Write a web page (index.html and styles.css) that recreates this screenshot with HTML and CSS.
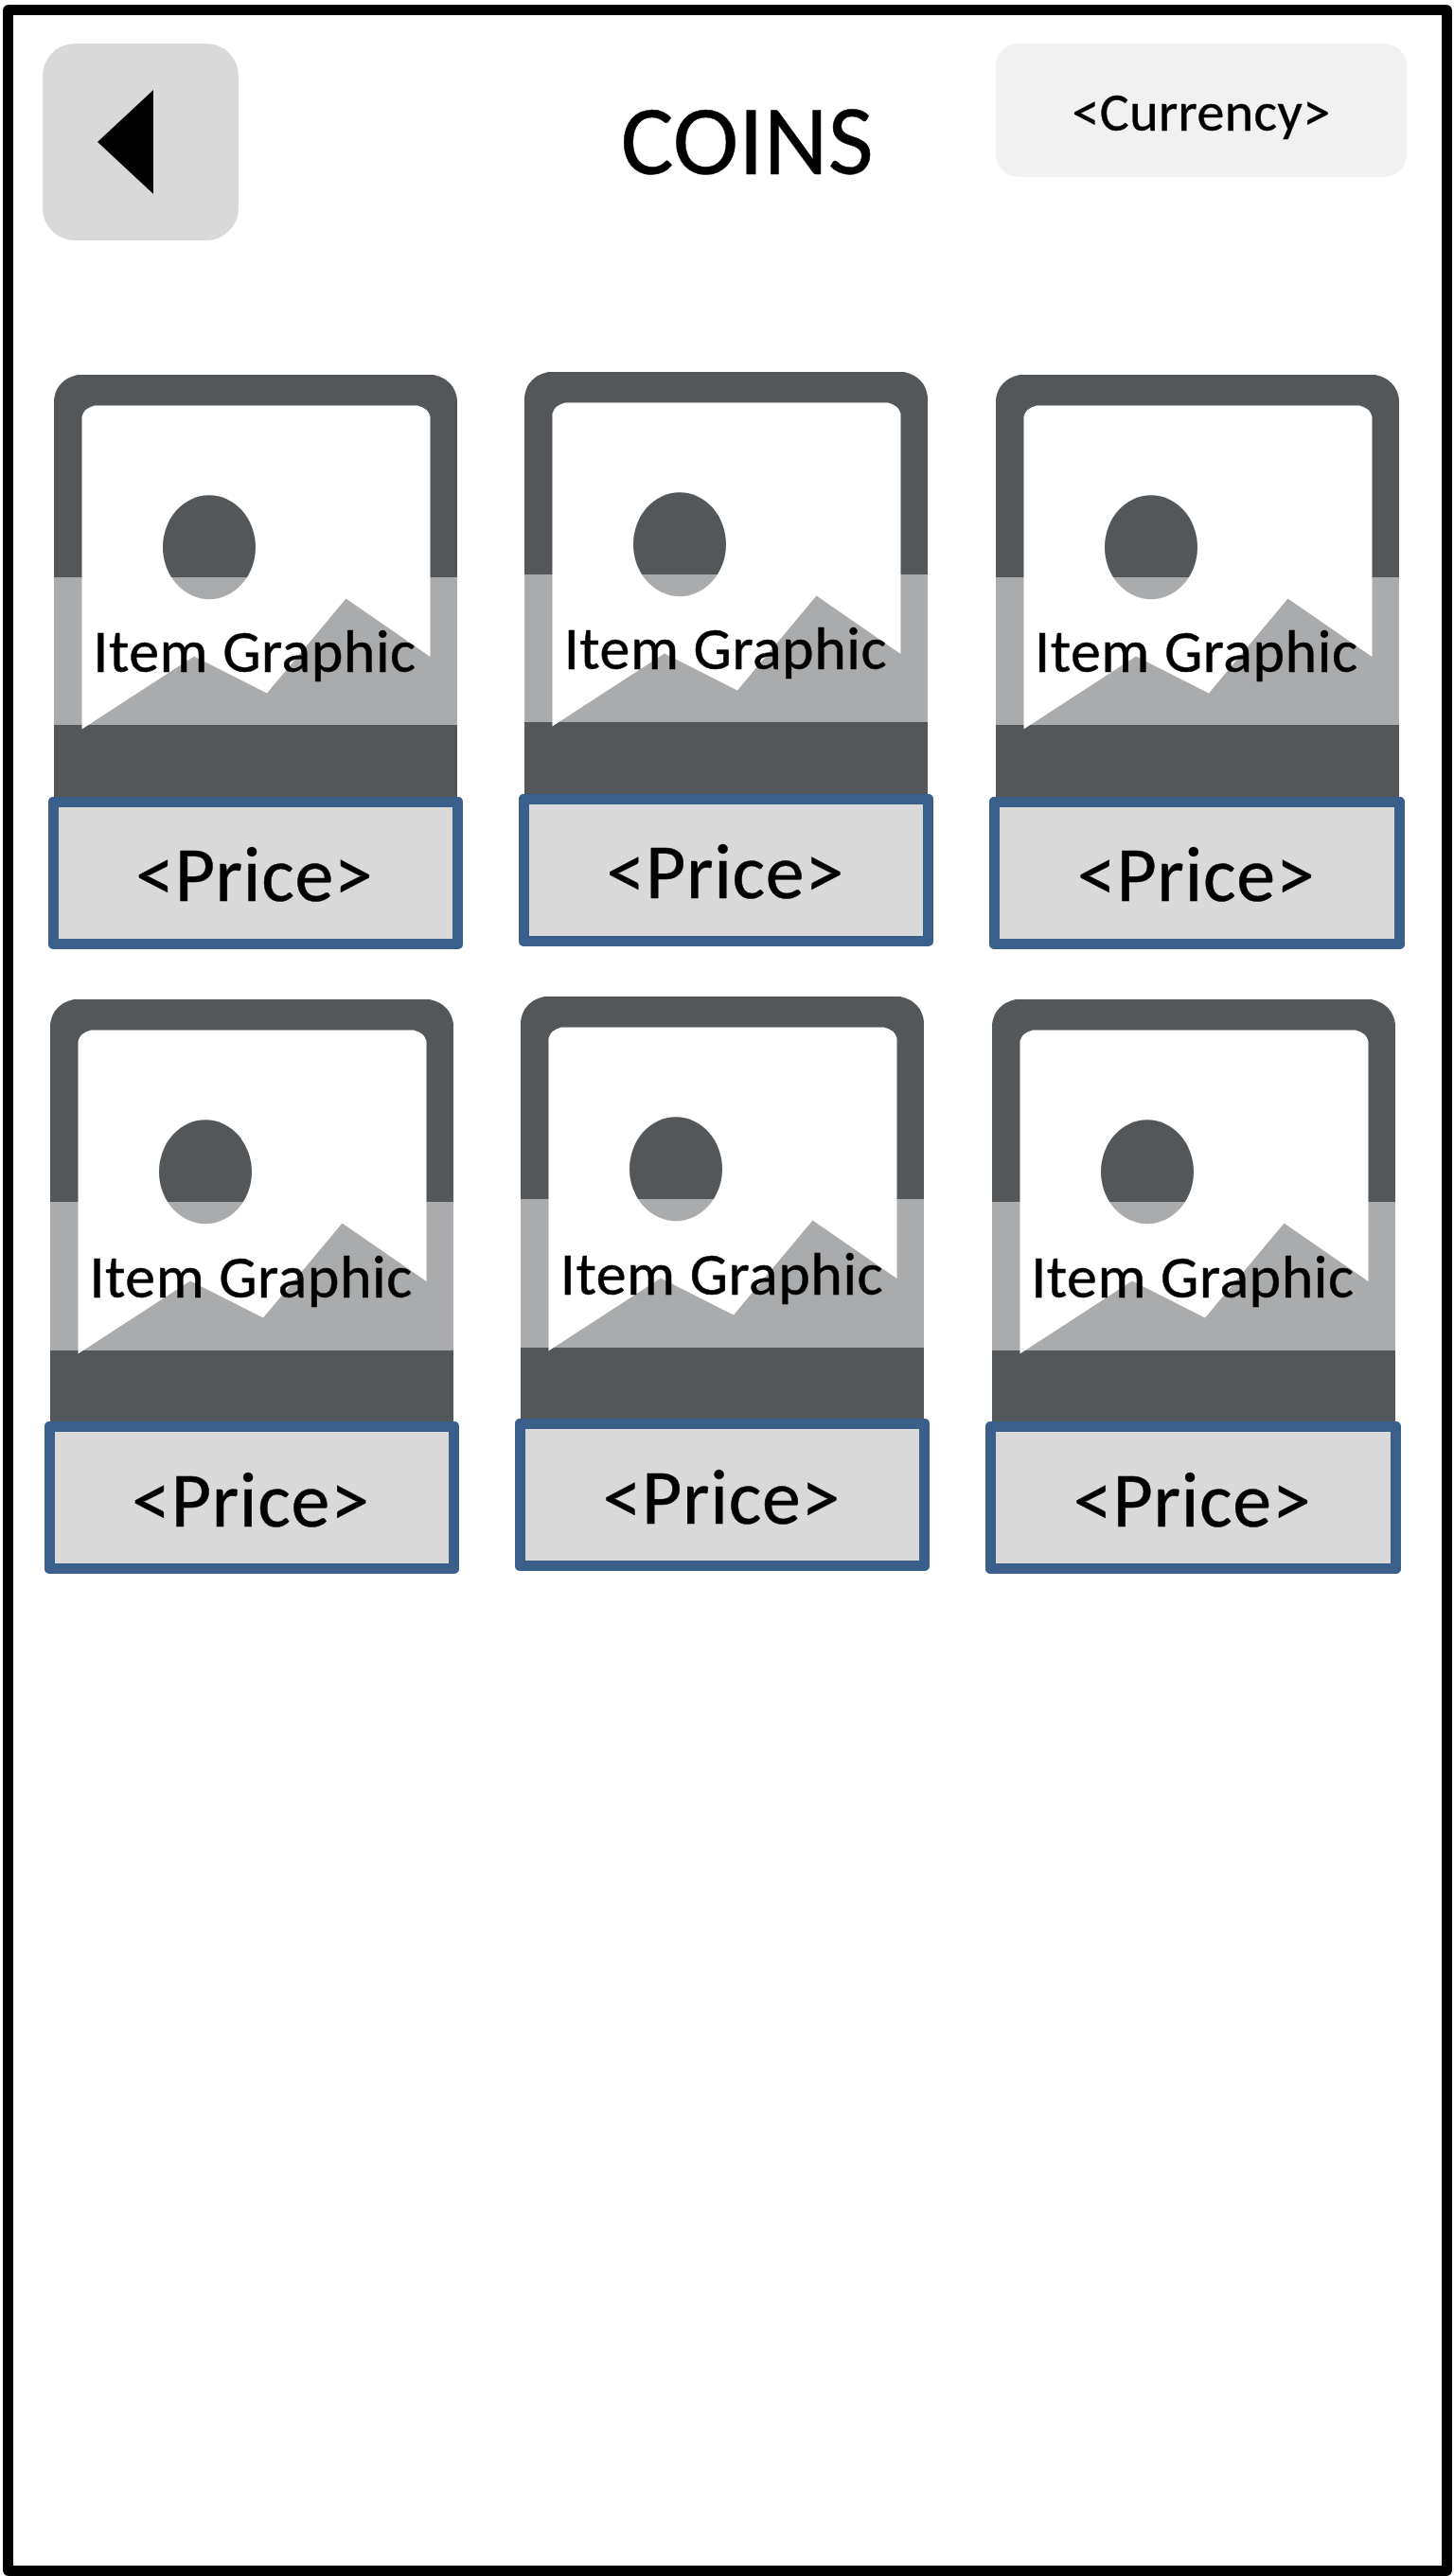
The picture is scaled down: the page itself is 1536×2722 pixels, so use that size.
FILE: index.html
```html
<!DOCTYPE html>
<html lang="en">
<head>
<meta charset="utf-8">
<title>Coins</title>
<link rel="stylesheet" href="styles.css">
</head>
<body>
<svg class="defs" aria-hidden="true">
  <symbol id="placeholder" viewBox="0 0 426 448">
    <path class="ink" d="M0 448V26Q3 5 25 0H401Q423 5 426 26V448Z"/>
    <path class="paper" d="M29.500 374.500V44Q32 35 43 32.500H384Q395 35 397.500 44V298L308.500 236.500 225 336.500 148 297.500Z"/>
    <ellipse class="ink" cx="164" cy="182.200" rx="49" ry="55"/>
  </symbol>
</svg>
<main class="screen">
  <header class="topbar">
    <button class="back" aria-label="Back">
      <svg class="arrow" viewBox="0 0 59 110"><path d="M0 55 59 0V110Z"/></svg>
    </button>
    <h1 class="title"><span>COINS</span></h1>
    <div class="currency"><span>&lt;Currency&gt;</span></div>
  </header>
  <section class="grid">
    <article class="card"><div class="graphic"><svg class="art"><use href="#placeholder"/></svg><div class="band"><span>Item Graphic</span></div></div><button class="price"><span>&lt;Price&gt;</span></button></article>
    <article class="card raised"><div class="graphic"><svg class="art"><use href="#placeholder"/></svg><div class="band"><span>Item Graphic</span></div></div><button class="price"><span>&lt;Price&gt;</span></button></article>
    <article class="card"><div class="graphic"><svg class="art"><use href="#placeholder"/></svg><div class="band"><span>Item Graphic</span></div></div><button class="price"><span>&lt;Price&gt;</span></button></article>
  </section>
  <section class="grid second">
    <article class="card"><div class="graphic"><svg class="art"><use href="#placeholder"/></svg><div class="band"><span>Item Graphic</span></div></div><button class="price"><span>&lt;Price&gt;</span></button></article>
    <article class="card raised"><div class="graphic"><svg class="art"><use href="#placeholder"/></svg><div class="band"><span>Item Graphic</span></div></div><button class="price"><span>&lt;Price&gt;</span></button></article>
    <article class="card"><div class="graphic"><svg class="art"><use href="#placeholder"/></svg><div class="band"><span>Item Graphic</span></div></div><button class="price"><span>&lt;Price&gt;</span></button></article>
  </section>
</main>
</body>
</html>
```
FILE: styles.css
```css
* { box-sizing: border-box; }
body {
  margin: 0;
  height: 2722px;
  padding: 4.5px 2.5px 0 3px;
  overflow: hidden;
  background: #fff;
  color: #000;
  font-family: Carlito, Calibri, Lato, sans-serif;
  -webkit-text-stroke: 0.5px #000;
}
.defs { position: absolute; width: 0; height: 0; }
.ink { fill: #53575a; }
.paper { fill: #fff; }
button { font: inherit; color: inherit; border: 0; padding: 0; margin: 0; }

.screen {
  height: 2717.5px;
  border: 11px solid #000;
  border-radius: 6px;
}
.topbar {
  display: flex;
  justify-content: space-between;
  align-items: flex-start;
  height: 208px;
  margin: 30px 36.5px 0 30.5px;
}
.back {
  display: flex;
  align-items: center;
  width: 207px;
  height: 208px;
  padding-left: 58px;
  background: #d9d9d9;
  border-radius: 34px;
}
.arrow { display: block; width: 59px; height: 110px; }
.title {
  display: flex;
  justify-content: center;
  width: 265px;
  margin: 42.5px 0 0 275px;
  font-size: 105px;
  line-height: 120px;
  font-weight: 400;
  white-space: nowrap;
}
.currency {
  display: flex;
  align-items: center;
  justify-content: center;
  width: 434px;
  height: 141px;
  padding-top: 4px;
  background: #f1f1f1;
  border-radius: 24px;
  font-size: 58px;
  letter-spacing: 0.4px;
}
.grid {
  display: grid;
  grid-template-columns: repeat(3, 438.500px);
  column-gap: 58.900px;
  margin: 142px 0 0 36.500px;
}
.second { margin: 53.800px 0 0 32.600px; }
.raised { margin-top: -3px; margin-bottom: 3px; }
.graphic {
  display: flex;
  flex-direction: column;
  height: 446px;
  margin: 0 6px 0 6.500px;
  position: relative;
}
.art { position: absolute; left: 0; top: 0; width: 426px; height: 448px; }
.band {
  display: flex;
  align-items: center;
  justify-content: center;
  position: relative;
  height: 156.500px;
  margin-top: 214px;
  padding: 1px 2px 0 0;
  background: rgba(255, 255, 255, .5);
  font-size: 64px;
  letter-spacing: 0.5px;
  white-space: nowrap;
}
.price {
  display: flex;
  align-items: center;
  justify-content: center;
  width: 100%;
  height: 161px;
  padding: 4px 2px 0 0;
  position: relative;
  background: #d9d9d9;
  border: 11px solid #3a5f8b;
  border-radius: 5px;
  font-size: 82px;
  letter-spacing: 0.6px;
}
```
